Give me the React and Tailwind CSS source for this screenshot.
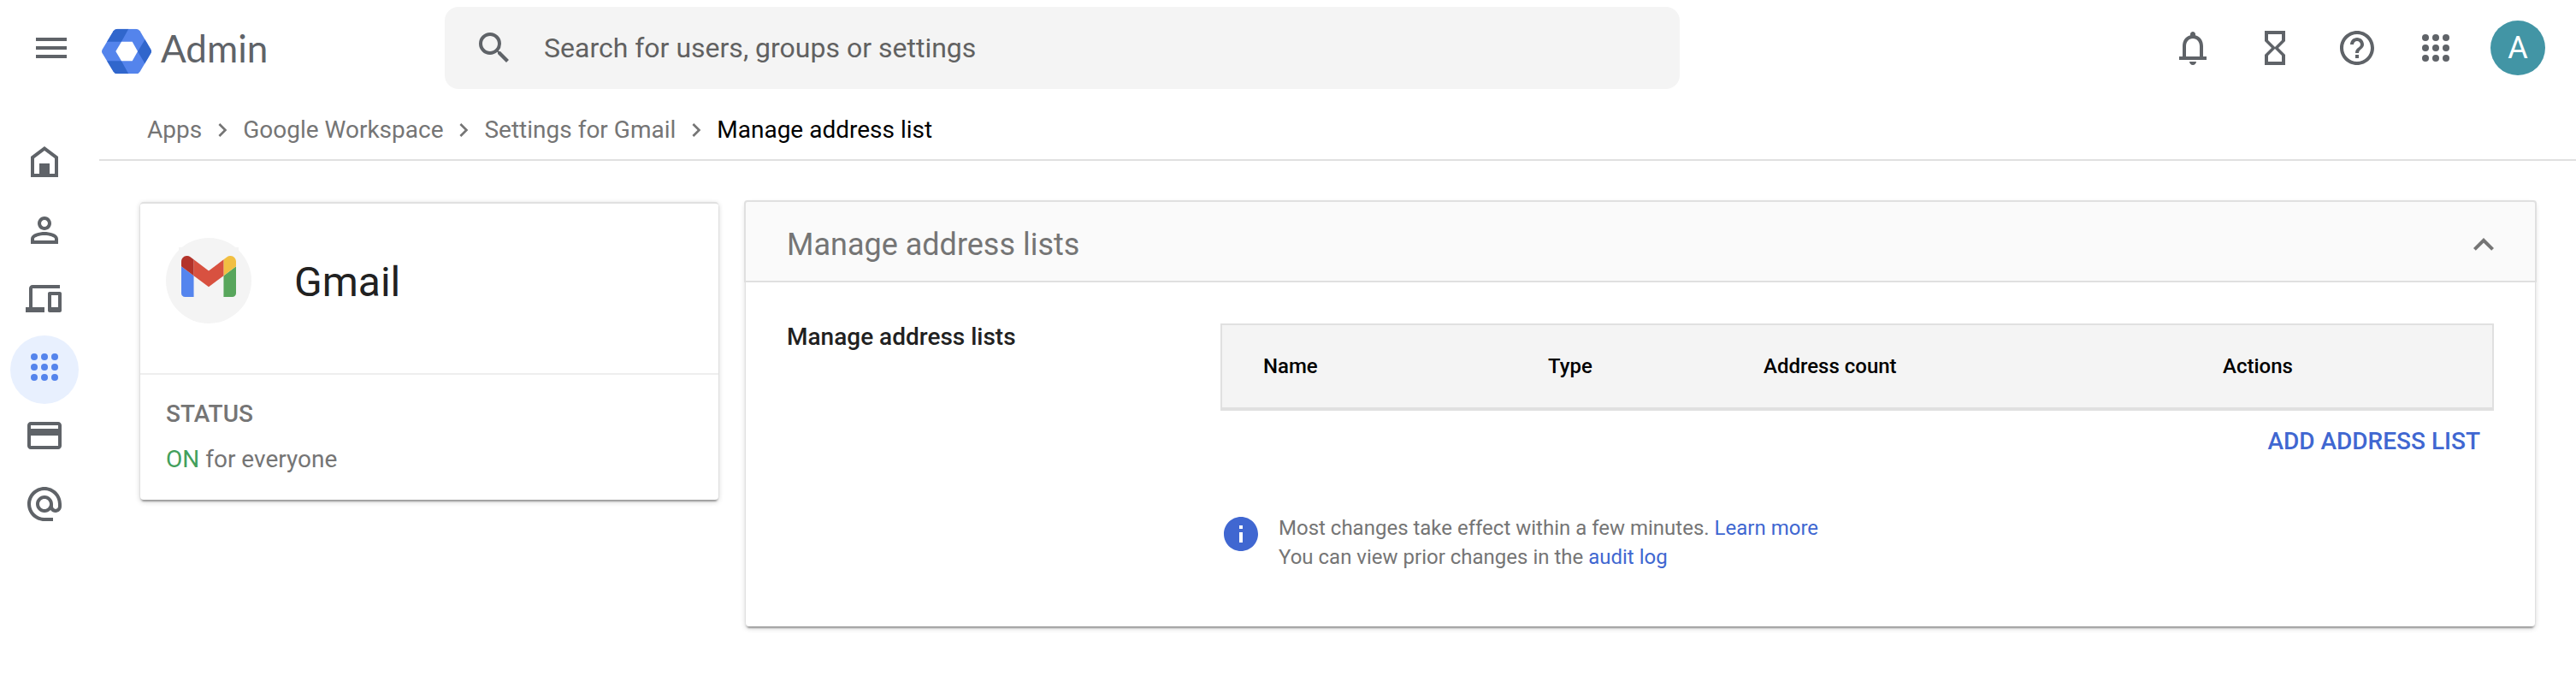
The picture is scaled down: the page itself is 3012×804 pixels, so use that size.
import React from "react";
import clsx from "clsx";
import {
  MdAlternateEmail,
  MdChevronRight,
  MdCreditCard,
  MdExpandLess,
  MdHelpOutline,
  MdHourglassEmpty,
  MdInfo,
  MdMenu,
  MdSearch,
} from "react-icons/md";

const Icon = ({ children }) => (
  <svg viewBox="0 0 24 24" fill="currentColor" className="size-12">
    {children}
  </svg>
);

const HomeIcon = () => (
  <Icon>
    <path d="M12 3 4 9v12h16V9l-8-6zm6 16h-3v-6H9v6H6v-9l6-4.5 6 4.5v9z" />
  </Icon>
);

const PersonIcon = () => (
  <Icon>
    <path d="M12 4C9.79 4 8 5.79 8 8s1.79 4 4 4 4-1.79 4-4-1.79-4-4-4zm0 6c-1.1 0-2-.9-2-2s.9-2 2-2 2 .9 2 2-.9 2-2 2zM12 13c-2.67 0-8 1-8 4v3h16v-3c0-3-5.33-4-8-4zm6 5H6v-1c0-.9 3.2-2 6-2s6 1.1 6 2v1z" />
  </Icon>
);

const DevicesIcon = () => (
  <Icon>
    <path d="M5 6h16V4H5c-1.1 0-2 .9-2 2v11H1v3h11v-3H5V6zm16 2h-6c-.55 0-1 .45-1 1v10c0 .55.45 1 1 1h6c.55 0 1-.45 1-1V9c0-.55-.45-1-1-1zm-1 9h-4v-7h4v7z" />
  </Icon>
);

const AppsIcon = () => (
  <Icon>
    {[6, 12, 18].map((y) =>
      [6, 12, 18].map((x) => <circle key={`${x}-${y}`} cx={x} cy={y} r="2" />),
    )}
  </Icon>
);

const BellIcon = () => (
  <Icon>
    <path d="M18 17v-6c0-3.07-1.63-5.64-4.5-6.32V4c0-.83-.67-1.5-1.5-1.5s-1.5.67-1.5 1.5v.68C7.64 5.36 6 7.92 6 11v6H4v2h16v-2h-2zm-2 0H8v-6c0-2.48 1.51-4.5 4-4.5s4 2.02 4 4.5v6zm-4 5c1.1 0 2-.9 2-2h-4c0 1.1.9 2 2 2z" />
  </Icon>
);

const AdminLogo = () => (
  <svg viewBox="0 0 180 162" className="h-[54px] w-[60px]">
    <clipPath id="hexagon">
      <path d="M58 2h65q9 0 14 8l38 64q4 7 0 14l-38 64q-5 8-14 8H58q-9 0-14-8L5 88q-4-7 0-14L44 10q5-8 14-8z" />
    </clipPath>
    <g clipPath="url(#hexagon)">
      <path fill="#5484ec" d="M0 0h180v162H0z" />
      <path fill="#3066cc" d="M40 0h58L72 47H15z" />
      <path fill="#3066cc" d="m158 34 30 47-30 49-29-48z" />
      <path fill="#3066cc" d="M15 115h57l26 47H40z" />
    </g>
    <path fill="#fff" d="M72 47h38l19 34-19 34H72L52 81z" />
  </svg>
);

const GmailLogo = () => (
  <svg viewBox="0 0 70 70" className="size-[70px] bg-[#f4f4f4]">
    <svg x="3" y="10" width="64" height="48" viewBox="52 42 88 66">
      <path fill="#5585ee" d="M58 108h14V74L52 59v43c0 3.32 2.69 6 6 6" />
      <path fill="#58a65c" d="M120 108h14c3.32 0 6-2.69 6-6V59l-20 15" />
      <path fill="#f1bf42" d="M120 48v26l20-15v-8c0-7.42-8.47-11.65-14.4-7.2" />
      <path fill="#d85140" d="M72 74V48l24 18 24-18v26L96 92" />
      <path
        fill="#b3332a"
        d="M52 51v8l20 15V48l-5.6-4.2c-5.94-4.45-14.4-.22-14.4 7.2"
      />
    </svg>
  </svg>
);

const navItems = [
  { label: "Home", icon: <HomeIcon /> },
  { label: "Directory", icon: <PersonIcon /> },
  { label: "Devices", icon: <DevicesIcon /> },
  { label: "Apps", icon: <AppsIcon />, active: true },
  { label: "Billing", icon: <MdCreditCard className="size-12" /> },
  { label: "Account", icon: <MdAlternateEmail className="size-12" /> },
];

const crumbs = ["Apps", "Google Workspace", "Settings for Gmail"];

const cardShadow =
  "shadow-[0_2px_2px_rgba(0,0,0,0.14),0_4px_2px_-2px_rgba(0,0,0,0.2),0_2px_6px_rgba(0,0,0,0.2)]";

function Header() {
  return (
    <header className="flex h-28 items-center pr-9 text-[#5f6368]">
      <div className="flex w-[520px] shrink-0 items-center pl-9">
        <button type="button" aria-label="Main menu">
          <MdMenu className="size-12" />
        </button>
        <a href="#" className="ml-[34px] flex items-center gap-2.5 pt-2">
          <AdminLogo />
          <span className="pb-2 font-['Lato',sans-serif] text-[44px] leading-[54px]">
            Admin
          </span>
        </a>
      </div>

      <label className="flex h-24 max-w-[1444px] flex-1 items-center gap-[34px] rounded-2xl bg-[#f4f4f4] pl-[34px]">
        <MdSearch className="size-12" />
        <input
          type="search"
          aria-label="Search"
          placeholder="Search for users, groups or settings"
          className="h-full flex-1 bg-transparent text-[32px] outline-none placeholder:text-[#616161]"
        />
      </label>

      <div className="ml-auto flex items-center gap-12 pl-12">
        <button type="button" aria-label="Notifications">
          <BellIcon />
        </button>
        <button type="button" aria-label="Tasks">
          <MdHourglassEmpty className="size-12" />
        </button>
        <button type="button" aria-label="Help">
          <MdHelpOutline className="size-12" />
        </button>
        <div className="-ml-1 flex items-center gap-10">
          <button type="button" aria-label="Google apps">
            <AppsIcon />
          </button>
          <button
            type="button"
            className="size-16 rounded-full bg-[#4295a5] text-4xl text-white"
          >
            A
          </button>
        </div>
      </div>
    </header>
  );
}

function SideNav() {
  return (
    <nav className="flex w-[116px] shrink-0 flex-col pt-10 pl-3">
      {navItems.map(({ label, icon, active }) => (
        <a
          key={label}
          href="#"
          aria-label={label}
          className={clsx(
            "flex size-20 items-center justify-center rounded-full pb-1.5",
            active ? "bg-[#e8f0fe] text-[#5484ec]" : "text-[#5f6368]",
          )}
        >
          {icon}
        </a>
      ))}
    </nav>
  );
}

function Breadcrumbs() {
  return (
    <nav className="flex h-[76px] items-center border-b-2 border-[#e0e0e0] pt-1.5 pl-14 text-[28px] text-[#757575]">
      {crumbs.map((crumb) => (
        <React.Fragment key={crumb}>
          <a href="#">{crumb}</a>
          <MdChevronRight className="mx-2 size-8" />
        </React.Fragment>
      ))}
      <span className="text-black">Manage address list</span>
    </nav>
  );
}

function AppCard() {
  return (
    <aside
      className={clsx(
        "w-[676px] shrink-0 rounded border-t-2 border-[#e0e0e0] bg-white",
        cardShadow,
      )}
    >
      <div className="flex h-[200px] gap-[50px] border-b-2 border-[#eeeeee] px-[30px] pt-10">
        <div className="flex size-[100px] justify-center rounded-full bg-[#f4f4f4] pt-[11px]">
          <GmailLogo />
        </div>
        <h1 className="text-5xl leading-[104px] text-[#212121]">Gmail</h1>
      </div>
      <div className="flex flex-col gap-[21px] px-[30px] pt-[30px] pb-[31px] text-[28px] leading-8 text-[#757575]">
        <h2 className="font-medium">STATUS</h2>
        <p>
          <span className="text-[#43a05c]">ON</span> for everyone
        </p>
      </div>
    </aside>
  );
}

function AddressLists() {
  return (
    <section className={clsx("flex-1 rounded bg-white", cardShadow)}>
      <div className="-mx-0.5 -mt-0.5 flex h-24 items-center justify-between rounded-t border-2 border-[#e0e0e0] bg-[#fafafa] pt-2 pr-9 pl-12 text-[#757575]">
        <h2 className="text-4xl">Manage address lists</h2>
        <button type="button" aria-label="Collapse">
          <MdExpandLess className="size-12" />
        </button>
      </div>

      <div className="flex px-12 pt-12 pb-16">
        <h3 className="w-[507px] shrink-0 text-[28px] leading-8 font-medium text-[#212121]">
          Manage address lists
        </h3>
        <div className="flex-1">
          <table className="w-full table-fixed border-separate border-spacing-0 border-2 border-b-4 border-[#e0e0e0] bg-[#f4f4f4] text-left text-2xl text-black">
            <thead>
              <tr className="h-24">
                <th className="w-[333px] pl-12 font-medium">Name</th>
                <th className="w-[252px] pl-12 font-medium">Type</th>
                <th className="w-[537px] pl-12 font-medium">Address count</th>
                <th className="pl-12 font-medium">Actions</th>
              </tr>
            </thead>
          </table>
          <div className="flex justify-end">
            <button
              type="button"
              className="h-[72px] px-4 text-[28px] font-medium text-[#4067d1]"
            >
              ADD ADDRESS LIST
            </button>
          </div>
          <div className="mt-12 flex gap-5">
            <MdInfo className="size-12 text-[#4067d1]" />
            <p className="text-2xl leading-[34px] text-[#757575]">
              Most changes take effect within a few minutes.{" "}
              <a href="#" className="text-[#4067d1]">
                Learn more
              </a>
              <br />
              You can view prior changes in the{" "}
              <a href="#" className="text-[#4067d1]">
                audit log
              </a>
            </p>
          </div>
        </div>
      </div>
    </section>
  );
}

function App() {
  return (
    <div className="min-h-screen bg-white font-['Roboto',sans-serif]">
      <Header />
      <div className="flex">
        <SideNav />
        <div className="flex-1">
          <Breadcrumbs />
          <main className="flex items-start gap-8 p-12">
            <AppCard />
            <AddressLists />
          </main>
        </div>
      </div>
    </div>
  );
}

export default App;
